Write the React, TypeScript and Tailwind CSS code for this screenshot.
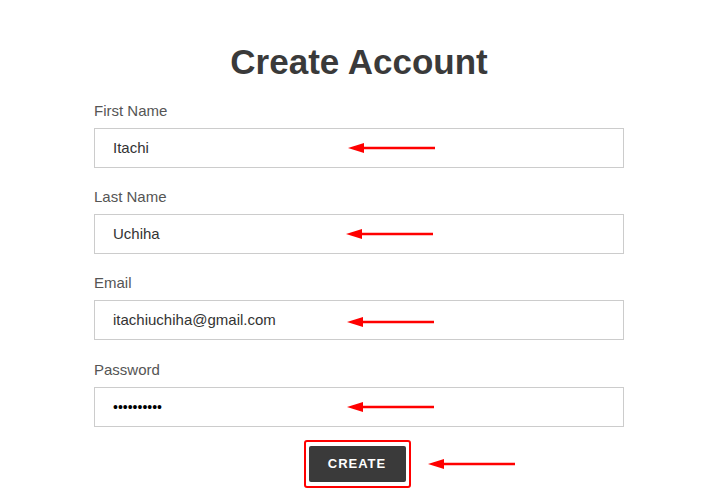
import React from "react";

function Arrow({ className }: { className: string }) {
  return (
    <svg className={className} width="90" height="14" viewBox="0 0 90 14" fill="none">
      <line x1="14" y1="7" x2="87" y2="7" stroke="#f00" strokeWidth="2.5" />
      <polygon points="0,7 16,2 16,12" fill="#f00" />
    </svg>
  );
}

const fields = [
  { label: "First Name", value: "Itachi", type: "text", arrow: "left-[253px] top-[12px]" },
  { label: "Last Name", value: "Uchiha", type: "text", arrow: "left-[251px] top-[12px]" },
  { label: "Email", value: "itachiuchiha@gmail.com", type: "email", arrow: "left-[252px] top-[14px]" },
  { label: "Password", value: "••••••••••", type: "password", arrow: "left-[252px] top-[12px]" },
];

export default function App() {
  return (
    <div
      className="min-h-[500px] w-[726px] bg-white text-[#333]"
      style={{ fontFamily: '"Liberation Sans", Arial, sans-serif' }}
    >
      <div className="ml-[94px] w-[530px] pt-[38px]">
        <h1 className="text-center text-[35px] font-bold leading-[48px] text-[#3a3a3a]">
          Create Account
        </h1>
        <div className="mt-[16px] flex flex-col gap-[20px]">
          {fields.map((f, i) => (
            <div key={f.label} className={i === 3 ? "mt-[1px]" : ""}>
              <label className="block text-[15px] leading-[18px] text-[#555]">{f.label}</label>
              <div className="relative mt-[8px] flex h-[40px] items-center border border-[#ccc] px-[18px]">
                <span
                  className={
                    f.type === "password"
                      ? "text-[14px] text-black"
                      : "text-[15px] text-[#333]"
                  }
                >
                  {f.value}
                </span>
                <Arrow className={`absolute ${f.arrow}`} />
              </div>
            </div>
          ))}
        </div>
        <div className="relative mt-[13px] flex justify-center">
          <div className="ml-[-4px] rounded-[3px] border-2 border-[#f00] px-[3px] py-[4px]">
            <button className="h-[36px] w-[97px] rounded-[2px] bg-[#3a3a3a] text-[13px] font-bold tracking-[1px] text-white">
              CREATE
            </button>
          </div>
          <Arrow className="absolute left-[334px] top-[17px]" />
        </div>
      </div>
    </div>
  );
}
